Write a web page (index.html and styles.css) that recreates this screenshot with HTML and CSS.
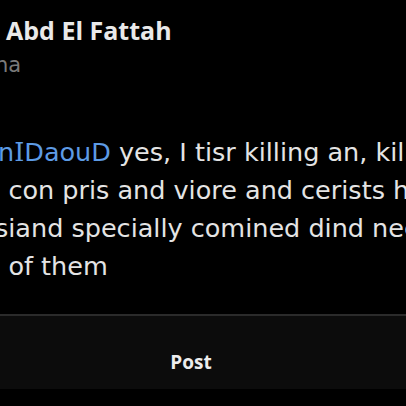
FILE: index.html
```
<!DOCTYPE html>
<html lang="en">
<head>
<meta charset="utf-8">
<title>Post</title>
<link rel="stylesheet" href="styles.css">
</head>
<body>
<main class="screen">
  <header class="author">
    <div class="name">Abd El Fattah</div>
    <div class="handle">na</div>
  </header>
  <section class="tweet">
    <div class="line l1"><span class="mention">n<span class="serif-i">I</span>DaouD</span> yes, I tisr killing an, killing</div>
    <div class="line l2">s con pris and viore and cerists have</div>
    <div class="line l3">siand specially comined dind need</div>
    <div class="line l4">s of them</div>
  </section>
  <div class="divider"></div>
  <footer class="bar">
    <span class="post">Post</span>
  </footer>
</main>
</body>
</html>
```
FILE: styles.css
```
html, body {
  margin: 0;
  padding: 0;
  background: #000;
}
body {
  width: 406px;
  height: 406px;
  overflow: hidden;
}
.screen {
  display: flex;
  flex-direction: column;
  width: 406px;
  height: 406px;
  overflow: hidden;
  background: #000;
}
.author {
  padding: 15px 0 0 6px;
  display: flex;
  flex-direction: column;
}
.name {
  font-family: "Open Sans", "DejaVu Sans", sans-serif;
  font-weight: 700;
  font-size: 25px;
  line-height: 31px;
  color: #e9e9e9;
  white-space: nowrap;
}
.handle {
  margin: 6px 0 0 -11px;
  font-family: "DejaVu Sans", sans-serif;
  font-size: 21px;
  line-height: 26px;
  color: #7a7a7a;
  white-space: nowrap;
}
.tweet {
  margin-top: 55px;
  display: flex;
  flex-direction: column;
}
.line {
  font-family: "DejaVu Sans", sans-serif;
  font-size: 25.5px;
  line-height: 38px;
  color: #e4e4e4;
  white-space: nowrap;
}
.l1 { margin-left: -2px; }
.l2 { margin-left: -13px; }
.l3 { margin-left: -5px; }
.l4 { margin-left: -13px; }
.mention {
  color: #5d9be4;
}
.serif-i {
  font-family: "DejaVu Serif", serif;
}
.divider {
  margin-top: 29px;
  height: 2px;
  background: #2b2b2b;
}
.bar {
  height: 73px;
  background: #0c0c0c;
  display: flex;
  justify-content: center;
  align-items: flex-start;
  padding: 34px 24px 0 0;
  box-sizing: border-box;
}
.post {
  font-family: "Open Sans", sans-serif;
  font-weight: 700;
  font-size: 19px;
  line-height: 24px;
  color: #ededed;
}
```
